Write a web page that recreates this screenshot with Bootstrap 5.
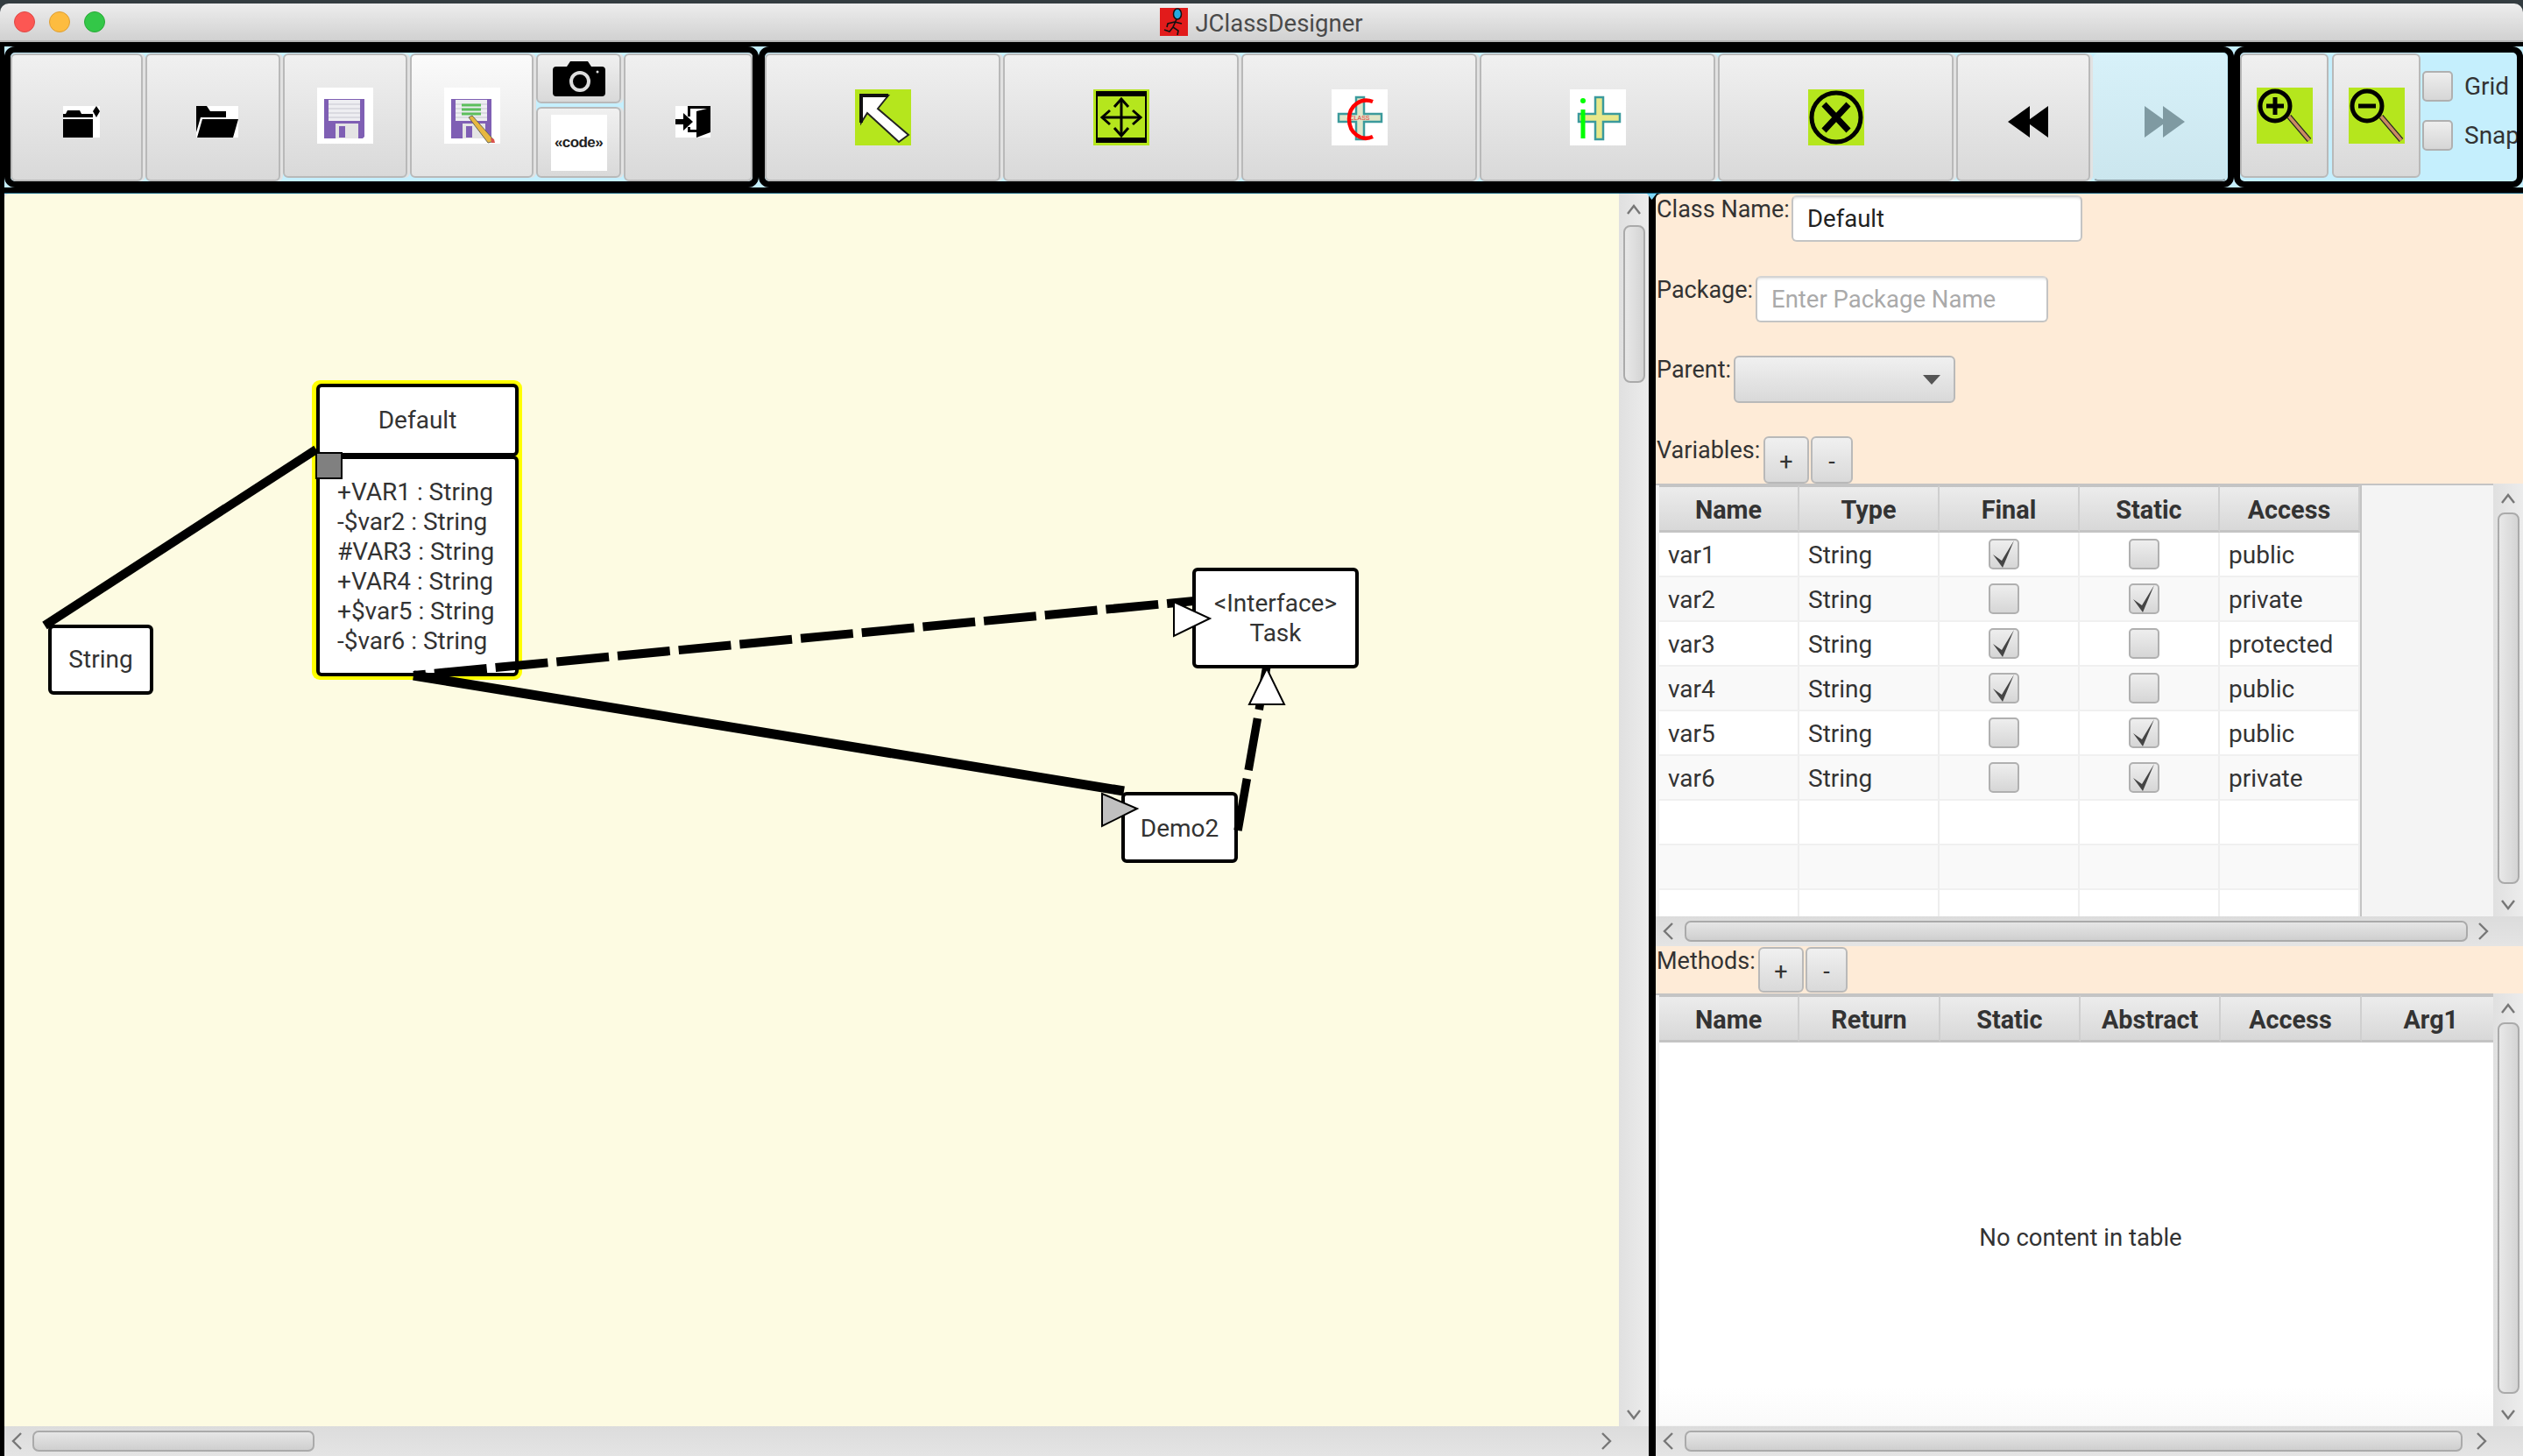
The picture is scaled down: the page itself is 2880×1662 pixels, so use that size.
<!DOCTYPE html>
<html lang="en">
<head>
  <meta charset="UTF-8">
  <title>JClassDesigner</title>
  <link href="https://cdn.jsdelivr.net/npm/bootstrap@5.3.0/dist/css/bootstrap.min.css" rel="stylesheet">
  <style>
    html, body { margin: 0; width: 2880px; height: 1662px; overflow: hidden; background: #333c40; }
    body { font-family: Roboto, "Liberation Sans", sans-serif; font-size: 28px; color: #333; }
    svg { display: block; }
    .app-win { width: 2880px; height: 1662px; padding-top: 4px; }

    /* title bar */
    .title-bar { height: 44px; background: linear-gradient(#ededed, #d1d1d1); border-bottom: 2px solid #b4b4b4; border-radius: 10px 10px 0 0; display: grid; grid-template-columns: 1fr auto 1fr; align-items: center; }
    .lights { display: flex; gap: 16px; padding-left: 16px; }
    .light { width: 24px; height: 24px; border-radius: 50%; }
    .l-red { background: #fc5753; border: 1px solid #df4744; }
    .l-yel { background: #fdbc40; border: 1px solid #de9f34; }
    .l-grn { background: #33c748; border: 1px solid #27aa35; }
    .title-txt { color: #4a4a4a; font-size: 27.5px; line-height: 32px; padding-top: 3px; }

    /* toolbar */
    .tool-wrap { background: #000; height: 173px; padding: 5px 0 0 5px; }
    .tool-row { height: 161px; background: #c5effd; display: flex; }
    .tool-grp { border: 7px solid #000; border-radius: 12px; background: #c5effd; display: flex; gap: 3px; height: 161px; padding-top: 1px; overflow: hidden; }
    .g-file { width: 861px; }
    .g-edit { width: 1684px; }
    .g-view { width: 330px; gap: 4px; }
    .tool-foot { height: 4px; background: #000; border-bottom: 1px solid #0b5d7c; margin-top: 3px; }
    .fx-btn { --bs-btn-padding-x: 0; --bs-btn-padding-y: 0; --bs-btn-border-radius: 6px; --bs-btn-font-size: 27px; background: linear-gradient(#f0f0f0, #d9d9d9); border: 2px solid #b9b9b9; color: #333; display: flex; align-items: center; justify-content: center; flex: none; }
    .g-file .fx-btn, .g-edit .fx-btn { box-shadow: 3px 0 0 #e2e2e2; }
    .fx-tall { height: 146px; }
    .fx-short { height: 142px; }
    .fx-hover { background: linear-gradient(#fbfbfb, #e3e3e3); }
    .g-edit .fx-btn.fx-off:disabled { background: linear-gradient(#d7f1f9, #cbe6ee); background-origin: border-box; border-color: transparent; border-bottom-color: #8a9ba1; opacity: 1; box-shadow: none; }
    .ico-low { margin: 10px 0 0 10px; }
    .w-new { width: 151px; } .w-open { width: 154px; } .w-save { width: 142px; } .w-saveas { width: 141px; }
    .w-exit { width: 147px; } .w-tool { width: 269px; } .w-hist { width: 153px; } .w-zoom { width: 101px; }
    .snap-stack { width: 97px; display: flex; flex-direction: column; gap: 4px; }
    .cam-btn { height: 57px; }
    .code-btn { height: 81px; }
    .code-tile { width: 64px; height: 64px; background: #fff; display: flex; align-items: center; justify-content: center; font: 700 17px "Liberation Sans", sans-serif; color: #222; letter-spacing: -.6px; }
    .opt-col { display: flex; flex-direction: column; gap: 21px; padding-top: 20px; margin-left: -2px; }
    .opt-line { display: flex; align-items: center; gap: 13px; white-space: nowrap; height: 35px; line-height: 33px; }
    .fx-box { width: 35px; height: 35px; flex: none; border: 2px solid #b0b0b0; border-radius: 5px; background: linear-gradient(#eee, #d6d6d6); display: inline-block; }

    /* panes */
    .work { height: 1441px; background: #000; position: relative; }
    .work::before { content: ""; position: absolute; left: 1880px; top: 0; width: 11px; height: 7px; background: #7fd6f5; clip-path: polygon(0 0, 100% 0, 50% 100%); }
    .canvas-pane { width: 1890px; border-left: 5px solid #000; border-right: 8px solid #000; background: #e2e2e2; }
    .canvas-body { height: 1407px; }
    .canvas-sheet { width: 1843px; height: 1407px; background: #fdfbe2; border-radius: 6px 0 0 0; position: relative; overflow: hidden; }
    .wires { position: absolute; left: 0; top: 0; pointer-events: none; }

    /* diagram nodes */
    .uml { position: absolute; background: #fff; border: 4px solid #000; border-radius: 6px; text-align: center; display: flex; flex-direction: column; align-items: center; justify-content: center; line-height: 34px; white-space: nowrap; }
    .n-string { left: 50px; top: 492px; width: 120px; height: 80px; }
    .n-iface { left: 1356px; top: 427px; width: 190px; height: 115px; }
    .n-demo { left: 1275px; top: 683px; width: 133px; height: 81px; padding-top: 2px; }
    .n-default { position: absolute; left: 351px; top: 213px; width: 240px; height: 342px; background: #ff0; border-radius: 9px; padding: 4px 4px 0 5px; }
    .d-head { background: #fff; border: 4px solid #000; border-radius: 6px; height: 83px; display: flex; align-items: center; justify-content: center; white-space: nowrap; }
    .d-body { background: #fff; border: 4px solid #000; border-radius: 6px; height: 252px; margin-top: -1px; padding: 21px 0 0 20px; line-height: 34px; white-space: nowrap; }

    /* scrollbars */
    .vbar { width: 34px; flex: none; background: linear-gradient(90deg, #e0e0e0, #ececec); display: flex; flex-direction: column; align-items: center; }
    .vbar-thumb { width: 25px; border: 2px solid #aaa; border-radius: 8px; background: linear-gradient(90deg, #e8e8e8, #d4d4d4); flex: none; }
    .v-arrow { height: 36px; flex: none; display: flex; align-items: center; justify-content: center; }
    .v-tight { height: 33px; }
    .v-low { height: 26px; }
    .hbar { height: 34px; flex: none; background: linear-gradient(#dcdcdc, #e4e4e4); display: flex; align-items: center; }
    .hbar-thumb { height: 24px; border: 2px solid #aaa; border-radius: 7px; background: linear-gradient(#e6e6e6, #cfcfcf); flex: none; }
    .h-arrow { flex: none; display: flex; justify-content: center; }
    .h-gap { margin-left: 13px; }
    .h-gap-r { margin-left: 12px; }
    .h-end { margin-right: 42px; }
    .thumb-cv { height: 180px; }
    .thumb-cvh { width: 322px; }
    .thumb-tv { height: 424px; }
    .thumb-tvh { width: 894px; }
    .thumb-mv { height: 424px; }
    .thumb-mvh { width: 888px; }

    /* right panel */
    .side-pane { width: 990px; background: #feebd7; border-radius: 6px 0 0 0; }
    .form-zone { height: 331px; padding: 2px 0 0 1px; display: flex; flex-direction: column; gap: 38.6px; }
    .form-line { display: flex; height: 53px; }
    .form-line label, .meth-band label { line-height: 33px; flex: none; margin: 0; white-space: nowrap; font-size: 27px; }
    .lb-class { width: 154px; } .lb-pack { width: 113px; } .lb-parent { width: 88px; } .lb-vars { width: 122px; } .lb-meth { width: 116px; }
    .fx-input { height: 53px; border: 2px solid #c4c4c4; border-top-color: #d4d4d4; border-radius: 6px; background: #fff; font-size: 27.5px; color: #222; box-shadow: inset 0 3px 3px -2px #ddd; padding: 0 0 0 16px; flex: none; }
    .fx-input::placeholder { color: #aaa; opacity: 1; }
    .i-class { width: 332px; } .i-pack { width: 334px; }
    .fx-combo { width: 253px; height: 54px; justify-content: flex-end; padding-right: 15px; }
    .mini-btn { height: 54px; align-items: flex-end; padding-bottom: 8px; line-height: 30px; }
    .meth-band .mini-btn { height: 52px; padding-bottom: 7px; }
    .m-plus { width: 52px; } .m-minus { width: 48px; margin-left: 2px; }
    .tbl-zone { height: 526px; background: #f2f2f2; border-bottom: 1px solid #c8c8c8; }
    .tbl-main { height: 494px; }
    .tbl-view { flex: 1; background: #f4f4f4; border-top: 2px solid #c4c4c4; padding-left: 4px; overflow: hidden; min-width: 0; }
    .tbl-m { height: 494px; }
    .fx-table { --bs-table-bg: transparent; width: 802px; table-layout: fixed; border-collapse: separate; border-spacing: 0; margin: 0; border-right: 2px solid #c4c4c4; background: #fff; }
    .fx-table-m { width: 962px; border-right: 0; }
    .fx-table th { height: 54px; padding: 4px 0 0; background: linear-gradient(#ececec, #d8d8d8); border: 0; border-top: 2px solid #c4c4c4; border-right: 2px solid #cfcfcf; border-bottom: 3px solid #c4c4c4; text-align: center; vertical-align: middle; font-size: 28.8px; font-weight: 700; color: #333; }
    .fx-table td { height: 51px; padding: 2px 0 0 10px; border: 0; border-right: 2px solid #eee; border-bottom: 2px solid #f0f0f0; vertical-align: middle; line-height: 30px; color: #333; white-space: nowrap; }
    .fx-table tr:nth-child(even) td { background: #f9f9f9; }
    .fx-table td.ck { padding: 0 11px 0 0; text-align: center; }
    .fx-table td.ck .fx-box { vertical-align: middle; display: inline-flex; }
    .meth-band { height: 56px; padding: 2px 0 0 1px; display: flex; border-top: 1px solid #e4e4e4; }
    .meth-zone { height: 494px; background: #fff; }
    .empty-note { height: 437px; background: linear-gradient(#fff 90%, #fafafa); display: flex; align-items: center; justify-content: center; padding: 9px 0 0 10px; font-size: 27.5px; }
  </style>
</head>
<body>
<svg width="0" height="0" class="position-absolute">
  <symbol id="tick" viewBox="0 0 31 31"><polygon points="3,16 13,23 27,0 14,31" fill="#444"/></symbol>
  <symbol id="up" viewBox="0 0 18 12"><path d="M2 11 9 2l7 9" fill="none" stroke="#777" stroke-width="2.4"/></symbol>
  <symbol id="down" viewBox="0 0 18 12"><path d="M2 1l7 9 7-9" fill="none" stroke="#777" stroke-width="2.4"/></symbol>
  <symbol id="left" viewBox="0 0 12 20"><path d="M11 1 2 10l9 9" fill="none" stroke="#777" stroke-width="2.4"/></symbol>
  <symbol id="right" viewBox="0 0 12 20"><path d="M1 1l9 9-9 9" fill="none" stroke="#777" stroke-width="2.4"/></symbol>
  <symbol id="floppy" viewBox="0 0 64 64">
    <rect width="64" height="64" fill="#fff"/>
    <path d="M8 13 h46 v43 l-2 2 h-44z" fill="#7f5fb4"/>
    <rect x="13" y="14" width="36" height="24" fill="#eeeef2"/>
    <path d="M13 19h36M13 24h36M13 29h36M13 34h36" stroke="#d4d4dc" stroke-width="1.5"/>
    <rect x="21" y="41" width="26" height="17" fill="#e4e4e4"/>
    <rect x="25" y="44" width="7" height="13" fill="#7f5fb4"/>
  </symbol>
</svg>

<div class="app-win d-flex flex-column">
  <div class="title-bar">
    <div class="lights"><span class="light l-red"></span><span class="light l-yel"></span><span class="light l-grn"></span></div>
    <div class="d-flex align-items-center gap-2">
      <svg width="32" height="32" viewBox="0 0 32 32"><rect width="32" height="32" fill="#e21b1b"/><ellipse cx="20" cy="7" rx="4.5" ry="6" fill="#25a9e0" stroke="#111" stroke-width="1.5"/><path d="M19 13 15 22l6 4-1 5M15 22l-4 5-6-2M17 16l8 2M17 16l-8 2-1 4" fill="none" stroke="#111" stroke-width="1.6"/></svg>
      <span class="title-txt">JClassDesigner</span>
    </div>
    <div></div>
  </div>

  <div class="tool-wrap">
    <div class="tool-row">
      <div class="tool-grp g-file">
        <button class="btn fx-btn fx-tall w-new" type="button">
          <svg class="ico-low" width="42" height="36" viewBox="0 0 42 36"><rect width="42" height="36" fill="#fff"/><path d="M0 9h3l2-4h14l2 4h13v4H0zM0 15h34v21H0z"/><path d="M38 0l4 6-4 7-4-7z"/></svg>
        </button>
        <button class="btn fx-btn fx-tall w-open" type="button">
          <svg class="ico-low" width="48" height="36" viewBox="0 0 48 36"><rect width="48" height="36" fill="#fff"/><path d="M0 0h12l4 6h18v7H5L0 30zM7 15h41l-6 21H1z"/></svg>
        </button>
        <button class="btn fx-btn fx-short w-save" type="button"><svg width="64" height="64"><use href="#floppy"/></svg></button>
        <button class="btn fx-btn fx-short fx-hover w-saveas" type="button">
          <svg width="64" height="64" viewBox="0 0 64 64"><use href="#floppy" width="64" height="64"/><path d="M20 20h22M20 25h22M20 30h22" stroke="#5cbf5c" stroke-width="3"/><path d="M28 34l4-2 24 27-2 3-4 1z" fill="#e7b73f" stroke="#665" stroke-width="1"/><path d="M53 57l4 2 1 4-4 0z" fill="#d9534f"/></svg>
        </button>
        <div class="snap-stack">
          <button class="btn fx-btn cam-btn" type="button">
            <svg width="60" height="40" viewBox="0 0 60 40"><path d="M4 6h12l4-6h20l4 6h12a4 4 0 0 1 4 4v26a4 4 0 0 1-4 4H4a4 4 0 0 1-4-4V10a4 4 0 0 1 4-4z"/><circle cx="31" cy="23" r="10" fill="none" stroke="#ddd" stroke-width="4"/><circle cx="51" cy="12" r="1.5" fill="#ddd"/></svg>
          </button>
          <button class="btn fx-btn code-btn" type="button"><span class="code-tile">«code»</span></button>
        </div>
        <button class="btn fx-btn fx-tall w-exit" type="button">
          <svg class="ico-low" width="40" height="36" viewBox="0 0 40 36"><rect width="40" height="36" fill="#fff"/><path d="M14 0h26v30l-16 6v-6h-10v-6h3v3h7V6l12-3H17v9h-3z"/><path d="M0 15h9V8l11 10-11 10v-7H0z"/></svg>
        </button>
      </div>

      <div class="tool-grp g-edit">
        <button class="btn fx-btn fx-tall w-tool" type="button">
          <svg width="64" height="64" viewBox="0 0 64 64"><rect width="64" height="64" fill="#b5e61d"/><polygon points="7,7 38,7 26,22 61,52 50,60 14,27 7,38" fill="#fff" stroke="#222" stroke-width="2"/><path d="M7 38V7h31" fill="none" stroke="#111" stroke-width="4"/></svg>
        </button>
        <button class="btn fx-btn fx-tall w-tool" type="button">
          <svg width="64" height="64" viewBox="0 0 64 64"><rect width="64" height="64" fill="#b5e61d"/><path d="M3 2h58v6H3zM3 55h58v6H3z"/><path d="M4 2v58M60 2v58" stroke="#000" stroke-width="2"/><path d="M32 11v42M10 32h44" stroke="#000" stroke-width="3"/><path d="M24 20l8-9 8 9M24 44l8 9 8-9M19 24l-9 8 9 8M45 24l9 8-9 8" fill="none" stroke="#000" stroke-width="3"/></svg>
        </button>
        <button class="btn fx-btn fx-tall w-tool" type="button">
          <svg width="64" height="64" viewBox="0 0 64 64"><rect width="64" height="64" fill="#fff"/><path d="M28 9h9v19h20v9H37v20h-9V37H8v-9h20z" fill="#dfe6c9" stroke="#3b9a9c" stroke-width="2.5"/><text x="32" y="35" font-size="7" fill="#d33" text-anchor="middle" font-family="Liberation Sans">CLASS</text><path d="M47 14C34 9 20 18 20 34s14 26 27 20" fill="none" stroke="#f00" stroke-width="4.5"/></svg>
        </button>
        <button class="btn fx-btn fx-tall w-tool" type="button">
          <svg width="64" height="64" viewBox="0 0 64 64"><rect width="64" height="64" fill="#fff"/><path d="M29 9h9v19h19v9H38v20h-9V37H10v-9h19z" fill="#e8e88a" stroke="#3b9a9c" stroke-width="2.5"/><circle cx="15" cy="13" r="3" fill="#0f0"/><rect x="12.5" y="23" width="5" height="33" fill="#0f0"/></svg>
        </button>
        <button class="btn fx-btn fx-tall w-tool" type="button">
          <svg width="64" height="64" viewBox="0 0 64 64"><rect width="64" height="64" fill="#b5e61d"/><circle cx="32" cy="32" r="28" fill="none" stroke="#000" stroke-width="5"/><path d="M18 17l28 30M46 17 18 47" stroke="#000" stroke-width="7"/></svg>
        </button>
        <button class="btn fx-btn fx-tall w-hist" type="button">
          <svg class="ico-low" width="46" height="36" viewBox="0 0 46 36"><path d="M0 18 25 0v36zM21 18 46 0v36z"/></svg>
        </button>
        <button class="btn fx-btn fx-tall fx-off w-hist" type="button" disabled>
          <svg class="ico-low" width="46" height="36" viewBox="0 0 46 36"><path d="M46 18 21 0v36zM25 18 0 0v36z" fill="#7f9aa2"/></svg>
        </button>
      </div>

      <div class="tool-grp g-view">
        <button class="btn fx-btn fx-short w-zoom" type="button">
          <svg width="64" height="64" viewBox="0 0 64 64"><rect width="64" height="64" fill="#b5e61d"/><path d="M37 33 60 60" stroke="#222" stroke-width="6"/><path d="M37 33 60 60" stroke="#c98b63" stroke-width="3.5"/><circle cx="21" cy="21" r="17" fill="#b5e61d" stroke="#000" stroke-width="5"/><path d="M21 11v20M11 21h20" stroke="#000" stroke-width="5"/></svg>
        </button>
        <button class="btn fx-btn fx-short w-zoom" type="button">
          <svg width="64" height="64" viewBox="0 0 64 64"><rect width="64" height="64" fill="#b5e61d"/><path d="M37 33 60 60" stroke="#222" stroke-width="6"/><path d="M37 33 60 60" stroke="#c98b63" stroke-width="3.5"/><circle cx="21" cy="21" r="17" fill="#b5e61d" stroke="#000" stroke-width="5"/><path d="M11 21h20" stroke="#000" stroke-width="5"/></svg>
        </button>
        <div class="opt-col">
          <div class="opt-line"><span class="fx-box"></span><span>Grid</span></div>
          <div class="opt-line"><span class="fx-box"></span><span>Snap</span></div>
        </div>
      </div>
    </div>
    <div class="tool-foot"></div>
  </div>

  <div class="work d-flex">
    <div class="canvas-pane d-flex flex-column">
      <div class="canvas-body d-flex">
        <div class="canvas-sheet">
          <div class="uml n-string">String</div>
          <div class="n-default">
            <div class="d-head">Default</div>
            <div class="d-body">+VAR1 : String<br>-$var2 : String<br>#VAR3 : String<br>+VAR4 : String<br>+$var5 : String<br>-$var6 : String</div>
          </div>
          <div class="uml n-iface"><span>&lt;Interface&gt;</span><span>Task</span></div>
          <div class="uml n-demo">Demo2</div>
          <svg class="wires" width="1843" height="1407" viewBox="5 221 1843 1407">
            <line x1="51" y1="714" x2="361" y2="513" stroke="#000" stroke-width="10"/>
            <line x1="472" y1="771" x2="1283" y2="903" stroke="#000" stroke-width="11"/>
            <line x1="1363" y1="686" x2="472" y2="771" stroke="#000" stroke-width="10" stroke-dasharray="60 10" stroke-dashoffset="29"/>
            <line x1="1413" y1="948" x2="1446" y2="760" stroke="#000" stroke-width="9.5" stroke-dasharray="60 10"/>
            <rect x="361" y="517" width="29" height="29" fill="#808080" stroke="#000" stroke-width="2"/>
            <polygon points="1340,687 1381,706 1340,726" fill="#fff" stroke="#000" stroke-width="2"/>
            <polygon points="1258,906 1298,923 1258,943" fill="#c0c0c0" stroke="#000" stroke-width="2"/>
            <polygon points="1426,804 1466,804 1446,763" fill="#fff" stroke="#000" stroke-width="2"/>
          </svg>
        </div>
        <div class="vbar">
          <span class="v-arrow"><svg width="18" height="12"><use href="#up"/></svg></span>
          <span class="vbar-thumb thumb-cv"></span>
          <span class="v-arrow v-low mt-auto"><svg width="18" height="12"><use href="#down"/></svg></span>
        </div>
      </div>
      <div class="hbar">
        <span class="h-arrow px-2"><svg width="12" height="20"><use href="#left"/></svg></span>
        <span class="hbar-thumb thumb-cvh ms-1"></span>
        <span class="h-arrow ms-auto h-end"><svg width="12" height="20"><use href="#right"/></svg></span>
      </div>
    </div>

    <div class="side-pane d-flex flex-column">
      <div class="form-zone">
        <div class="form-line"><label class="lb-class">Class Name:</label><input class="form-control fx-input i-class" value="Default"></div>
        <div class="form-line"><label class="lb-pack">Package:</label><input class="form-control fx-input i-pack" placeholder="Enter Package Name"></div>
        <div class="form-line"><label class="lb-parent">Parent:</label>
          <button class="btn fx-btn fx-combo" type="button"><svg width="20" height="11" viewBox="0 0 20 11"><polygon points="0,0 20,0 10,11" fill="#555"/></svg></button>
        </div>
        <div class="form-line"><label class="lb-vars">Variables:</label><button class="btn fx-btn mini-btn m-plus" type="button">+</button><button class="btn fx-btn mini-btn m-minus" type="button">-</button></div>
      </div>

      <div class="tbl-zone">
        <div class="tbl-main d-flex">
          <div class="tbl-view">
            <table class="table fx-table">
              <thead><tr><th>Name</th><th>Type</th><th>Final</th><th>Static</th><th>Access</th></tr></thead>
              <tbody>
                <tr><td>var1</td><td>String</td><td class="ck"><span class="fx-box"><svg width="31" height="31"><use href="#tick"/></svg></span></td><td class="ck"><span class="fx-box"></span></td><td>public</td></tr>
                <tr><td>var2</td><td>String</td><td class="ck"><span class="fx-box"></span></td><td class="ck"><span class="fx-box"><svg width="31" height="31"><use href="#tick"/></svg></span></td><td>private</td></tr>
                <tr><td>var3</td><td>String</td><td class="ck"><span class="fx-box"><svg width="31" height="31"><use href="#tick"/></svg></span></td><td class="ck"><span class="fx-box"></span></td><td>protected</td></tr>
                <tr><td>var4</td><td>String</td><td class="ck"><span class="fx-box"><svg width="31" height="31"><use href="#tick"/></svg></span></td><td class="ck"><span class="fx-box"></span></td><td>public</td></tr>
                <tr><td>var5</td><td>String</td><td class="ck"><span class="fx-box"></span></td><td class="ck"><span class="fx-box"><svg width="31" height="31"><use href="#tick"/></svg></span></td><td>public</td></tr>
                <tr><td>var6</td><td>String</td><td class="ck"><span class="fx-box"></span></td><td class="ck"><span class="fx-box"><svg width="31" height="31"><use href="#tick"/></svg></span></td><td>private</td></tr>
                <tr><td></td><td></td><td></td><td></td><td></td></tr>
                <tr><td></td><td></td><td></td><td></td><td></td></tr>
                <tr><td></td><td></td><td></td><td></td><td></td></tr>
              </tbody>
            </table>
          </div>
          <div class="vbar">
            <span class="v-arrow v-tight"><svg width="18" height="12"><use href="#up"/></svg></span>
            <span class="vbar-thumb thumb-tv"></span>
            <span class="v-arrow v-low mt-auto"><svg width="18" height="12"><use href="#down"/></svg></span>
          </div>
        </div>
        <div class="hbar">
          <span class="h-arrow ms-2"><svg width="12" height="20"><use href="#left"/></svg></span>
          <span class="hbar-thumb thumb-tvh h-gap"></span>
          <span class="h-arrow h-gap-r"><svg width="12" height="20"><use href="#right"/></svg></span>
        </div>
      </div>

      <div class="meth-band"><label class="lb-meth">Methods:</label><button class="btn fx-btn mini-btn m-plus" type="button">+</button><button class="btn fx-btn mini-btn m-minus" type="button">-</button></div>

      <div class="meth-zone d-flex">
        <div class="tbl-view tbl-m">
          <table class="table fx-table fx-table-m">
            <thead><tr><th>Name</th><th>Return</th><th>Static</th><th>Abstract</th><th>Access</th><th>Arg1</th></tr></thead>
          </table>
          <div class="empty-note">No content in table</div>
        </div>
        <div class="vbar">
          <span class="v-arrow v-tight"><svg width="18" height="12"><use href="#up"/></svg></span>
          <span class="vbar-thumb thumb-mv"></span>
          <span class="v-arrow v-low mt-auto"><svg width="18" height="12"><use href="#down"/></svg></span>
        </div>
      </div>
      <div class="hbar">
        <span class="h-arrow ms-2"><svg width="12" height="20"><use href="#left"/></svg></span>
        <span class="hbar-thumb thumb-mvh h-gap"></span>
        <span class="h-arrow ms-3"><svg width="12" height="20"><use href="#right"/></svg></span>
      </div>
    </div>
  </div>
</div>

<script src="https://cdn.jsdelivr.net/npm/bootstrap@5.3.0/dist/js/bootstrap.bundle.min.js"></script>
</body>
</html>
